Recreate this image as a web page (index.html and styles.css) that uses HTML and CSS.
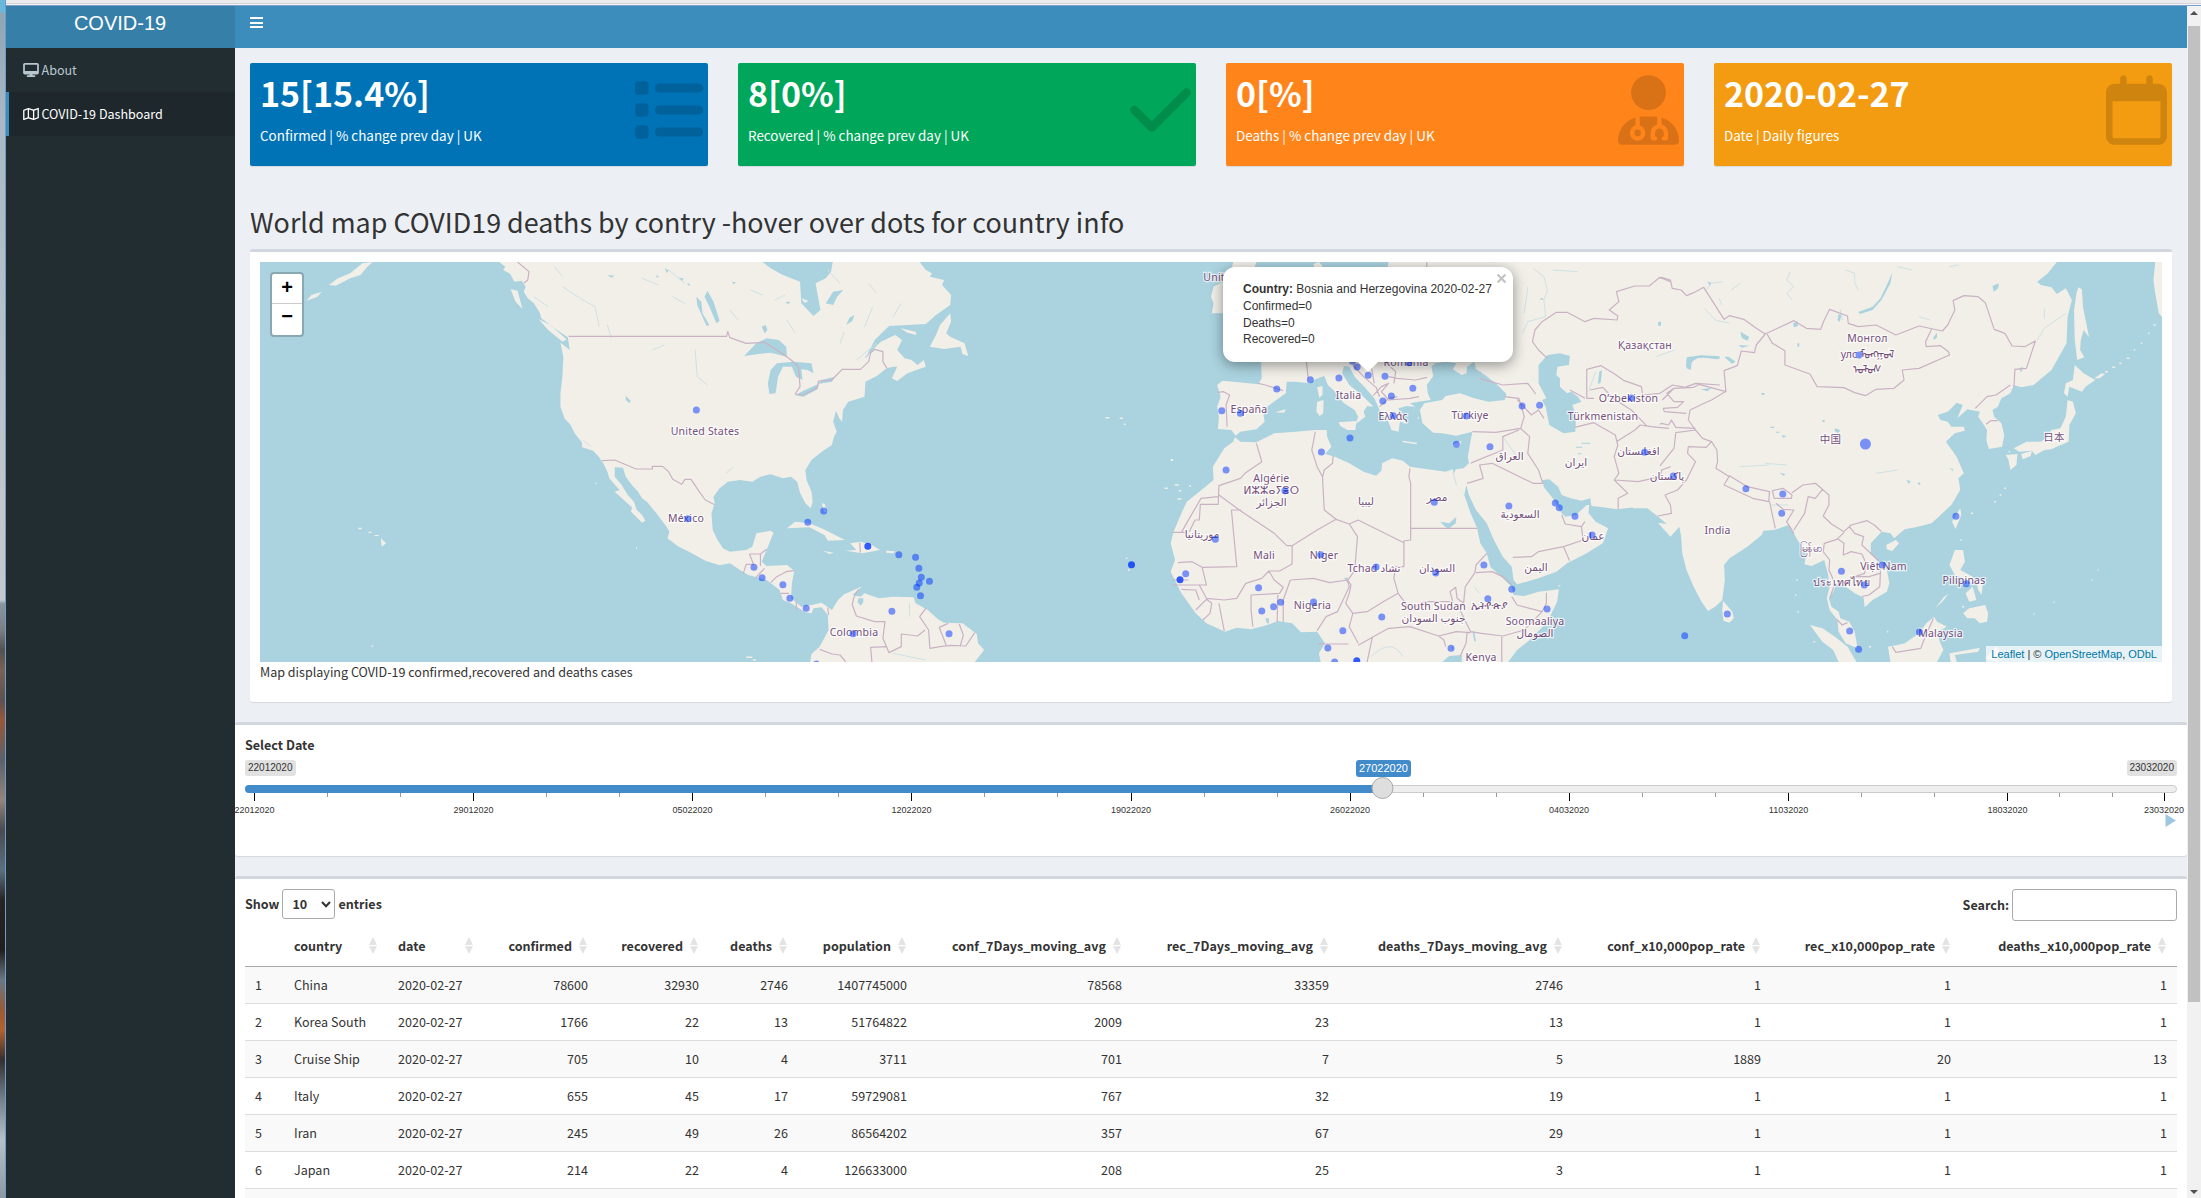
FILE: index.html
```html
<!DOCTYPE html>
<html lang="en">
<head>
<meta charset="utf-8">
<title>COVID-19</title>
<link rel="stylesheet" href="styles.css">
</head>
<body>
<div class="desktop"></div>
<div class="window">
  <div class="chrome"></div>
  <div class="app">
    <aside class="sidebar">
      <div class="logo">COVID-19</div>
      <nav class="menu">
        <a class="item">
          <svg width="16" height="14" viewBox="0 0 576 512"><path d="M64 0C28.7 0 0 28.7 0 64V352c0 35.3 28.7 64 64 64H240l-10.7 32H160c-17.7 0-32 14.3-32 32s14.3 32 32 32H416c17.7 0 32-14.3 32-32s-14.3-32-32-32H346.7L336 416H512c35.3 0 64-28.7 64-64V64c0-35.3-28.7-64-64-64H64zM512 64V288H64V64H512z"/></svg>
          <span>About</span>
        </a>
        <a class="item active">
          <svg width="16" height="14" viewBox="0 0 576 512"><path d="M565.6 36.2C572.1 40.7 576 48.1 576 56V392c0 10-6.2 18.9-15.5 22.4l-168 64c-5.2 2-10.9 2.1-16.1 .3L192.500 417.500l-160 61c-7.400 2.800-15.700 1.800-22.200-2.700S0 463.900 0 456V120c0-10 6.100-18.900 15.500-22.400l168-64c5.200-2 10.900-2.100 16.100-.3L383.500 94.500l160-61c7.400-2.800 15.700-1.800 22.200 2.700zM48 136.500V421.200l120-45.700V90.800L48 136.500zM360 422.700V137.300L216 89.300V374.700l144 48zm48-1.500l120-45.700V90.800L408 136.500V421.200z"/></svg>
          <span>COVID-19 Dashboard</span>
        </a>
      </nav>
    </aside>

    <div class="page">
      <header class="navbar"><div class="burger"><i></i><i></i><i></i></div></header>
      <main class="content">
        <section class="cards">
          <div class="card blue">
            <h3>15[15.4%]</h3><p>Confirmed | % change prev day | UK</p>
            <svg class="icon" width="70" height="70" viewBox="0 0 512 512"><rect x="16" y="46" width="98" height="98" rx="26"/><rect x="16" y="207" width="98" height="98" rx="26"/><rect x="16" y="368" width="98" height="98" rx="26"/><rect x="160" y="62" width="352" height="66" rx="32"/><rect x="160" y="223" width="352" height="66" rx="32"/><rect x="160" y="384" width="352" height="66" rx="32"/></svg>
          </div>
          <div class="card green">
            <h3>8[0%]</h3><p>Recovered | % change prev day | UK</p>
            <svg class="icon" width="61" height="70" viewBox="0 0 448 512"><path d="M438.600 105.400c12.500 12.500 12.500 32.800 0 45.300l-256 256c-12.500 12.500-32.800 12.500-45.300 0l-128-128c-12.500-12.500-12.500-32.800 0-45.300s32.800-12.500 45.300 0L160 338.700 393.400 105.400c12.500-12.500 32.800-12.500 45.300 0z"/></svg>
          </div>
          <div class="card orange">
            <h3>0[%]</h3><p>Deaths | % change prev day | UK</p>
            <svg class="icon" width="61" height="70" viewBox="0 0 448 512"><path d="M224 256A128 128 0 1 0 224 0a128 128 0 1 0 0 256zm-96 55.200C54 332.900 0 401.300 0 482.300C0 498.700 13.300 512 29.700 512H418.300c16.400 0 29.700-13.300 29.700-29.700c0-81-54-149.400-128-171.100V362c27.600 7.100 48 32.200 48 62v40c0 8.800-7.200 16-16 16H336c-8.800 0-16-7.200-16-16s7.200-16 16-16V424c0-17.700-14.300-32-32-32s-32 14.300-32 32v24c8.800 0 16 7.200 16 16s-7.200 16-16 16H256c-8.800 0-16-7.200-16-16V424c0-29.800 20.400-54.900 48-62V304.900c-6-.6-12.100-.9-18.300-.9H178.300c-6.200 0-12.300 .3-18.300 .9v65.400c23.100 6.900 40 28.300 40 53.700c0 30.900-25.100 56-56 56s-56-25.100-56-56c0-25.400 16.900-46.800 40-53.700V311.200zM144 448a24 24 0 1 0 0-48 24 24 0 1 0 0 48z"/></svg>
          </div>
          <div class="card yellow">
            <h3>2020-02-27</h3><p>Date | Daily figures</p>
            <svg class="icon" width="61" height="70" viewBox="0 0 448 512"><path d="M152 24c0-13.300-10.700-24-24-24s-24 10.700-24 24V64H64C28.700 64 0 92.700 0 128v16 48V448c0 35.300 28.700 64 64 64H384c35.300 0 64-28.700 64-64V192 144 128c0-35.300-28.700-64-64-64H344V24c0-13.300-10.700-24-24-24s-24 10.700-24 24V64H152V24zM48 192H400V448c0 8.800-7.200 16-16 16H64c-8.800 0-16-7.200-16-16V192z"/></svg>
          </div>
        </section>

        <h2 class="title">World map COVID19 deaths by contry -hover over dots for country info</h2>

        <section class="box map-box">
          <div class="map">
            <svg class="world" width="1902" height="400" viewBox="260 262 1902 400" preserveAspectRatio="none">
              <g transform="translate(240 250) scale(.4082 .33333)">
                <g class="land">
                  <path d="M635 36L650 50 645 60 662 72 672 95 690 92 700 110 695 125 705 145 720 160 735 190 738 205 770 235 803 262 808 300 785 278 792 320 790 380 785 430 785 470 795 505 810 525 820 550 838 578 838 592 865 602 880 622 890 640 900 665 905 685 915 700 930 720 918 725 945 755 960 772 958 785 985 818 993 812 985 795 972 780 965 755 950 735 935 705 918 680 918 652 938 653 945 680 960 705 975 725 985 745 997 755 1020 790 1045 830 1052 845 1047 865 1075 890 1100 905 1140 932 1175 946 1200 940 1225 960 1245 975 1290 990 1322 1020 1330 1050 1350 1060 1385 1087 1400 1090 1405 1075 1425 1072 1440 1095 1442 1140 1420 1190 1400 1212 1397 1236 1800 1236 1823 1200 1808 1180 1805 1152 1770 1120 1725 1118 1710 1108 1685 1080 1655 1060 1650 1042 1600 1040 1565 1045 1530 1030 1520 1040 1500 1035 1525 1008 1500 1022 1480 1033 1465 1050 1450 1080 1425 1058 1400 1065 1375 1070 1350 1045 1352 1000 1358 962 1340 945 1290 948 1278 935 1290 900 1307 848 1300 842 1265 850 1255 890 1240 900 1200 905 1183 895 1170 870 1158 840 1155 790 1163 760 1160 740 1175 715 1195 695 1225 690 1255 695 1275 680 1300 673 1330 685 1350 680 1365 695 1372 728 1385 760 1398 775 1403 755 1400 725 1388 690 1385 660 1400 630 1425 605 1450 585 1455 560 1462 545 1453 515 1460 482 1468 505 1475 515 1477 480 1490 455 1530 440 1532 395 1560 378 1584 355 1600 350 1610 350 1597 385 1610 393 1635 370 1680 350 1675 330 1660 345 1645 330 1628 325 1610 300 1622 270 1605 255 1570 275 1538 310 1555 270 1590 228 1635 225 1680 222 1705 195 1740 165 1742 135 1720 105 1725 90 1690 80 1695 70 1680 60 1665 36 1452 36 1448 65 1435 85 1410 100 1422 180 1405 198 1375 160 1372 95 1330 75 1300 55 1280 36Z"/>
                  <path d="M1740 190L1715 225 1705 255 1690 290 1725 297 1765 290 1770 312 1784 318 1775 280 1740 260 1730 250 1742 215ZM1618 235L1655 245 1658 255 1635 248ZM732 208L760 225 800 268 790 275 755 240ZM663 118L680 122 692 177 675 155ZM325 36L300 40 270 70 240 85 218 105 235 107 270 85 295 75 312 50ZM163 152L175 135 200 125 190 140ZM345 865L358 880 347 890ZM1340 835L1360 815 1395 820 1430 838 1482 870 1440 872 1432 855 1395 832ZM1483 902L1510 900 1495 880 1520 875 1548 885 1568 900 1525 910ZM1427 902L1455 908 1445 912ZM1583 902L1605 904 1600 910 1583 908ZM315 845h7v4h-7zM330 855h10v3h-10zM290 833h8v5h-8zM1375 145l18 8-10 6zM1425 760l8 2 4 25-6 0z"/>
                </g>
                <g class="lake">
                  <path d="M1235 318L1265 280 1290 265 1320 270 1338 290 1340 320 1300 308 1270 312ZM1297 432L1293 400 1300 360 1315 340 1355 335 1400 340 1405 370 1390 360 1375 358 1378 390 1362 380 1352 350 1330 350 1318 380 1312 430ZM1360 436L1380 422 1417 402 1415 418 1380 440ZM1415 402L1425 390 1457 380 1450 395ZM1145 122L1160 155 1175 212 1167 220 1150 170 1138 140ZM1118 140L1130 155 1133 190 1150 225 1143 228 1120 165ZM1278 230L1288 225 1292 240 1285 250ZM1515 1045h12v10l-6 12-8-10zM945 438l12 14-2 8-10-10zM1530 325L1568 260 1568 275 1535 322ZM1485 225l8-22 12-8-5 18zM900 75l18 2-8 6zM1435 160l18-35 25-5-15 20-10 25zM1040 55l10 6-4 8zM1075 82l12 4-4 8zM1095 100l8 2-3 6zM1020 75l6 4-5 5zM1205 95l10 2-6 6zM1335 158l12-4-2 8zM1450 130l14-6-4 10z"/>
                  <path class="stream" d="M790 110L840 150 870 170 880 230M900 225l10 40M1010 300l30-15M1115 300l5 80 25 25M1050 60l40 40M985 85l40 20M1060 140l30 20M1440 60l30 40M1550 170l-20 60M1510 330l50-50M1200 180l20 30M1250 120l30 15M1310 150l25-15M860 590l-20-20M720 140l35 30M770 50l20 30M1340 210l20 40M1470 280l10-35M1600 200l20-40M1540 100l20 30M1190 670l20-20M1640 1060v40M1600 1210l80 20"/>
                </g>
                <path class="border" d="M680 36L708 65 705 90 695 100M805 259H1192L1195 245 1200 263 1240 280 1285 277 1330 312 1350 330 1368 350 1372 410 1360 432 1380 435 1415 412 1417 393 1450 390 1475 358H1520L1540 335 1545 308 1555 298 1575 305 1575 335 1585 355M887 632L918 630 970 657H1010V649H1035L1050 665 1060 688 1082 703 1090 688H1105L1125 725 1140 750 1163 764M1248 912H1275V948M1248 912L1258 943H1240L1233 970M1275 912L1290 898M1262 985L1285 955M1300 998L1315 980 1338 965 1358 962M1325 1030H1345M1363 1055V1078M1440 1073L1442 1095M1518 878L1520 908"/>
                <path class="border" d="M1515 1018L1503 1045 1500 1065 1510 1098 1555 1115H1580L1575 1165 1590 1208 1620 1190V1152L1660 1158 1678 1140M1585 1190L1545 1192 1548 1236M1420 1198L1450 1212 1470 1215 1484 1236M1680 1075L1665 1100 1687 1140 1690 1195 1715 1190 1740 1186 1778 1188 1800 1148M1735 1120L1713 1132 1730 1186M1762 1122L1772 1155 1765 1186"/>
                <path class="isles" d="M2120 503h10M2155 505h8M2165 523h5M2280 629h6M2265 715h8M2290 705h10M2300 722h6M2325 708h5M2170 925h4M2175 960h5M1720 1225h20M1240 1222h15M1256 1230h8M322 1188h4M870 700h3M970 895h3"/>
              </g>

              <g transform="translate(1640 250) scale(.3578 .33333)">
                <g class="land">
                  <path d="M-20 36H1165L1140 70 1110 95 1120 105 1150 112 1165 132 1190 115 1207 150 1195 200 1192 280 1150 360 1100 405 1065 412 1045 405 1035 430 1010 445 1000 470 985 480 990 500 1010 520 1018 555 1012 590 975 597 968 570 970 540 955 515 945 500 950 485 915 478 887 505 902 465 885 458 860 485 832 495 840 510 860 515 870 530 905 530 908 542 880 550 855 575 885 620 905 670 890 685 895 720 870 765 815 820 770 832 740 838 710 865 700 850 675 845 645 880 645 912 690 960 697 1000 690 1025 650 1050 628 1072 625 1043 600 1030 575 1010 550 1000 540 1025 528 1045 535 1070 555 1085 560 1105 585 1115 600 1145 608 1195 575 1180 555 1145 552 1110 530 1080 522 1045 530 1010 525 970 515 930 480 948 460 943 465 905 440 870 430 850 415 825 375 840 345 842 340 855 300 890 250 925 235 945 237 990 230 1050 210 1070 190 1083 172 1055 150 1010 130 960 118 910 115 860 110 830 85 860 60 830 50 818 75 822 45 795 20 775 -20 775Z"/>
                  <path d="M232 1052L258 1085 262 1105 250 1118 233 1112 230 1080ZM475 1125L510 1135 545 1160 580 1190 605 1236H555L540 1200 510 1175ZM693 1190L720 1185 740 1180 780 1150 800 1120 822 1100 830 1115 858 1130 830 1145 838 1175 848 1200 830 1236H700ZM880 900H903L908 935 895 960 930 980 935 1000 905 985 880 975 865 945ZM903 1090L920 1075 965 1065 973 1090 970 1115 950 1120 935 1105 915 1105ZM910 1030L930 1010 940 1050 920 1055ZM940 990L958 1000 955 1035 945 1020ZM862 1032L845 1055 825 1075 850 1040ZM895 775L898 795 882 837 872 815ZM688 885L715 870 724 880 705 903 690 898ZM1225 112L1235 118 1238 170 1255 262 1240 240 1232 270 1230 300 1242 322 1222 330 1215 270 1213 180 1220 130ZM1215 345L1240 370 1272 390 1245 410 1235 425 1200 410 1195 440 1185 430 1190 400 1210 390ZM1195 450L1210 455 1218 490 1200 525 1198 575 1165 590 1150 598 1130 600 1105 615 1095 602 1060 605 1045 595 1080 575 1120 575 1135 565 1150 540 1175 535 1190 500ZM1022 615L1055 612 1052 645 1035 660 1030 630ZM1065 612L1095 603 1092 618 1070 628ZM1440 36H1462V205L1450 190 1440 130 1435 90ZM865 1210L890 1205 950 1193 945 1205 880 1215 885 1236H868ZM965 1225l30-35 10 10-5 36ZM1270 385L1290 370 1300 372 1285 385Z"/>
                </g>
                <g class="lake">
                  <path d="M705 68L700 100 675 150 650 180 615 192 610 186 650 170 672 145 690 105ZM130 355L132 330 160 318 220 320 215 328 180 322 160 325 145 335 142 360ZM235 320h12l20 15-10 6ZM280 245l25 15-5 12-15-8ZM428 220l12-6 2 14-12 4ZM555 192l8 2-5 22-6-6ZM545 535l15 6-6 8-10-6ZM170 418l30-4-12 10ZM985 108l18-8-2 14-12 12ZM340 428l8 2v5h-8zM1060 355l10-5-5 18ZM820 262l10-14v14l-8 8ZM395 555l14 3-8 6ZM390 668l16 4-4 6ZM775 700l8-4v10ZM865 655l10 2v6ZM745 690l12 4-6 8ZM275 285l30 2-20 6ZM188 95l12 3-6 8ZM365 530h10v4h-10zM380 545h10v3h-10zM510 510h6v6h-6zM440 280h5v10h-5z"/>
                  <path class="stream" d="M420 65L410 90 430 110 410 130 425 150M185 120l15-20 30-5M255 120l25-20M575 60l25 10 0 30 10 20M865 50l25-5M720 50l40 10M1190 190L1130 235 1110 270M180 175l30 35 40 10M660 670l60-10M280 650l80-5M350 640l60 5M365 765h50M560 180l5 30M220 145l10 20M1130 175v30M780 200l30 10"/>
                </g>
                <path class="border" d="M-5 106L40 95 60 82 85 90 90 115 115 120 130 137 150 128 178 112 235 208 250 197 290 208 325 235 350 252 325 285 320 308 283 303 272 347 235 362 240 425 165 403 150 412 95 415 62 450M350 252L430 212 465 235 505 238 515 210 530 178 580 198 582 220 610 230 660 225 715 255 780 228 845 243 860 225 880 180 875 152 905 137 945 140 965 158 990 238 1020 250 1040 288 1075 290 1105 273 1080 355 1048 358 1045 410M355 252L370 280 405 302 405 345 475 372 495 410 570 413 600 428 630 437 660 418 710 415 738 390 733 360 780 355 865 315 862 305 840 287 800 290 798 275 815 238M937 475L970 440 995 435 1035 405M967 523L980 512H1000M238 425L200 450 175 462 140 480 135 510 155 540M95 415L75 430 95 455 122 455 105 472 65 475 68 485 130 490M-5 390L10 400M40 488L45 530M-5 535H40L60 520 80 525 88 510 100 532 155 535M155 540L175 565 200 575 215 600 217 635 212 655 250 680M155 540L100 548 95 595 50 655 20 665 15 685-5 690M200 575L185 592 135 590 133 610 155 635 130 690 105 720 70 735 85 765 88 790 50 798M250 677L300 710 362 725 360 755 315 745 235 705ZM370 722L400 715 425 735 423 745 375 745ZM425 728L455 705 490 700 510 718 490 745 470 740 460 790 430 840M362 755L378 835M380 760L400 778 430 780 410 815 430 850M510 718L528 735V765L512 798 535 822 570 845 590 825 635 812 655 825 675 845M570 848L550 868 515 880 512 905 530 930 528 960 545 1000 530 1045M585 830L600 850 625 860 620 885 665 930 672 965 670 1010 640 1035 620 1040M550 865L570 880 568 915 590 905 620 912 630 935 628 970 595 982 600 1010M600 980H640L670 970M550 1108L565 1125 580 1118M705 1190L715 1207 785 1195 797 1160 820 1105"/>
                <path class="isles" d="M1300 365h8M1320 352h8M1340 340h6M1360 325h8M1380 300h4M1400 280h4M1420 250h4M1435 225h6M990 755h5M1005 735h5M1018 715h5M1030 605h4M925 790h6M895 870h4M437 990h4M433 1035h4M440 1085h4M485 1175h5M1100 1092h3M1278 960h3M1262 990h3M1155 1057h3M900 1070h6M690 1145h4M640 1190h6"/>
              </g>

              <g transform="translate(1160 250) scale(.3571 .33333)">
                <g class="land">
                  <path d="M160 405L175 392 235 398 275 403 285 385 283 335V200L430 100 455 60 636 60 640 36H1400V785L1370 770 1330 772 1280 778 1240 772 1208 768 1205 745 1180 752 1150 745 1125 735 1115 710 1090 688 1070 690 1075 712 1100 745 1108 760 1125 790 1135 800 1165 795 1195 765 1202 765 1200 790 1220 815 1255 835 1240 880 1195 910 1140 940 1110 965 1060 985 1000 1003 990 990 985 950 960 920 935 870 915 820 885 780 865 735 858 705 852 735 820 680 828 658 850 655 865 640 862 620 870 570 875 545 830 557 790 550 765 548 735 520 728 480 740 460 790 450 800 438 840 430 880 445 920 455 965 450 970 432 940 400 910 375 885 357 880 335 860 350 858 370 845 375 820 358 830 340 800 335 770 340 760 350 765 378 747 405 750 430 758 450 725 455 700 460 715 470 690 468 668 475 672 495 690 520 672 515 668 545 648 540 640 515 615 480 600 445 570 408 545 380 530 350 515 348 510 370 530 405 565 435 598 470 580 468 570 485 575 500 548 522 555 500 545 480 515 460 490 425 470 405 460 378 435 388 420 400 380 395 355 395 352 430 300 470 290 495 293 515 270 538 225 545 212 557 200 540 162 537 165 500 160 470 170 440Z"/>
                  <path d="M210 562L225 575 270 577 320 550 380 545 435 540 467 540 468 560 480 590 462 612 490 620 530 640 570 665 605 677 620 662 622 640 650 625 680 632 700 650 750 658 800 665 820 658 830 695 852 735 870 790 888 835 897 880 915 910 925 950 950 975 985 1010 990 1035 1020 1038 1060 1025 1117 1018 1112 1055 1085 1115 1035 1170 1000 1200 975 1236H450L445 1210 462 1180 440 1145 395 1147 370 1120 330 1113 300 1125 255 1138 215 1133 182 1145 130 1120 100 1090 60 1030 30 965 42 930 30 880 38 845 60 790 75 755 110 725 150 690 148 650 180 595 205 575ZM440 412L455 408 455 435 446 443ZM440 455L458 450 457 490 447 498 438 485ZM500 517L550 513 547 540 525 540 505 528ZM678 572L720 578 718 583 680 577ZM818 585L845 572 838 590 825 592ZM322 487L352 478 348 488ZM150 110L176 95V190L145 190 150 160 143 140ZM205 36H270L262 60H200ZM430 42l15-6 10 12-8 15-14-6Z"/>
                  <path d="M30 630h6v3h-6zM50 745h10v4H48zM722 500l4 4-4 4zM735 480l6 3-4 5zM1115 1005l8 2-6 3z"/>
                </g>
                <g class="lake">
                  <path d="M1060 345L1085 315 1120 310 1148 318 1145 345 1113 350 1110 375 1120 385 1120 410 1140 430 1152 425 1170 440 1180 455 1155 465 1165 500 1163 545 1130 550 1090 525 1080 470 1070 450 1082 445 1060 400ZM790 1236L810 1218 845 1215V1236ZM1230 365l8-5-4 38-8 4ZM1475 322l40-6 53 3-2 8-60-5-20 15-5 20-8-8zM875 1145h5l5 30-5-3ZM785 815l25 5 20-20-2 20-20 16-10-6ZM515 985l10-3v12ZM815 1190l8 3-4 6ZM295 1105h10v15h-6ZM900 365h-10l5 5ZM1395 215h8v12h-8zM1180 578h25v3h-25zM1165 590h18v3h-18zM1170 610h10v3h-10zM1065 145h8v4h-8z"/>
                  <path class="stream" d="M1045 55L1075 80 1085 120 1075 150 1080 200 1030 215 1015 250M1100 60l70 5M1030 110l-10 80M820 665l10 40M1220 365l-20 60M1440 300l-50 20M590 1220q60-60 90 0M960 560l40 60M880 1010l15 20"/>
                </g>
                <path class="border" d="M275 400L295 405 345 422M162 427L178 425 195 435 185 465 188 530M410 335L415 385M747 36V60M270 580L285 635 240 668 225 685 165 707 163 763 113 763 110 810H98L82 845M35 847H75M60 847L85 800 115 745 163 740M165 735L225 782 320 850 355 887 370 887 440 840 493 808 460 780 455 680 440 650 425 600 435 545M228 780H200L215 950 118 952 90 935 50 938M493 808L530 822 555 810 683 878M485 618L483 640 460 660 455 682M700 655L697 680 702 700V870L683 873V950L660 950 655 985 667 1030M702 835H888M370 887V942L335 963 305 963 285 985 240 1000 215 1045M530 822L553 860 545 962 523 995M365 990L430 985 475 998 525 990 530 1010 497 1085 465 1100 440 1142M305 963L320 990 345 1012 335 1030 255 1035V1080L260 1130M330 1035L328 1115M345 1115V1050L365 990M118 952L130 1005H35M35 990H80M110 1005L130 1045 180 1050 215 1045M525 990L535 1005 530 1030 520 1060 540 1090 530 1130 555 1180M440 1182H528M667 1030L625 1055 580 1085 540 1090M667 1030L700 1078 740 1055 820 1055 812 1025 828 1012 832 1045 850 1060M850 1060L855 1010 882 968 885 945 915 910M885 968L930 965 960 980 985 1005M850 1055L840 1080 870 1145 900 1150 960 1158 1020 1140 1070 1085 1000 1065 985 1040M1082 1028V1060L1070 1085M957 1160V1236M555 1186L590 1165 640 1135 700 1130 780 1158 830 1145 870 1148M780 1158L795 1170 800 1190M860 1148L857 1180 840 1220M595 1160L580 1236M60 1018L100 1020 110 1050M100 1080L130 1048 145 1060 140 1090 120 1110M165 1060L180 1143M860 700L905 685 895 645 930 640M870 640L880 635 960 600 960 560 1005 540M875 545L940 547 1010 535M930 640L1045 700H1072M1010 535L1035 560 1030 610 1060 660 1072 700M988 922L1040 920 1060 905 1130 890 1185 870 1180 830 1190 815M1130 890L1147 932M1125 795L1135 822 1180 830M895 385L960 405 1030 400 1052 432M965 440L1005 445 1020 500 1010 535M1000 448L1040 495 1060 480 1075 505M1162 532L1215 518 1275 555 1282 585 1272 620 1285 670 1272 690 1310 730 1283 745V778M1272 690L1340 695 1400 680 1405 660 1430 650M1278 575L1330 540 1345 525 1375 530 1425 535M1085 325L1060 300 1043 275 1050 240 1070 215 1110 187H1140L1190 215 1215 205 1280 210 1282 198 1258 180 1285 155 1278 125 1330 108H1370L1400 82 1430 95M1215 445H1195V358L1235 347 1270 370 1300 392 1348 410 1352 435 1400 430 1435 405 1470 412 1500 400 1568 405M1148 420L1190 445M1205 420L1240 412 1260 435 1275 450 1320 480 1365 530M597 437L620 410 640 400 620 425 640 450 700 445 725 440M540 345L570 380 605 412 615 440M640 380L665 385 715 390 748 382M640 345L660 365 655 400M665 440L640 445 615 470M590 340L600 400"/>
              </g>

              <g class="places">
                <text x="705" y="435">United States</text>
                <text x="686" y="522">México</text>
                <text x="854" y="636">Colombia</text>
                <text x="1245" y="281">United Kingdom</text>
                <text x="1249" y="412.500">España</text>
                <text x="1348.500" y="399">Italia</text>
                <text x="1393" y="420">Ελλάς</text>
                <text x="1470" y="419">Türkiye</text>
                <text x="1406" y="366">România</text>
                <text x="1645" y="349">Қазақстан</text>
                <text x="1628.500" y="401.500">O‘zbekiston</text>
                <text x="1603" y="419.500">Türkmenistan</text>
                <text x="1271.400" y="482">Algérie</text>
                <text x="1271.400" y="493.500">ⵍⵣⵣⴰⵢⴻⵔ</text>
                <text x="1271.400" y="506">الجزائر</text>
                <text x="1366" y="505">ليبيا</text>
                <text x="1437" y="501">مصر</text>
                <text x="1509.600" y="460">العراق</text>
                <text x="1576" y="466">ایران</text>
                <text x="1638.500" y="455">افغانستان</text>
                <text x="1667" y="480">پاکستان</text>
                <text x="1520" y="518">السعودية</text>
                <text x="1593" y="540">عمان</text>
                <text x="1202" y="538">موريتانيا</text>
                <text x="1264" y="558.500">Mali</text>
                <text x="1324" y="558.500">Niger</text>
                <text x="1374" y="571.500">Tchad تشاد</text>
                <text x="1437" y="571.500">السودان</text>
                <text x="1536" y="570.500">اليمن</text>
                <text x="1312.500" y="609">Nigeria</text>
                <text x="1433.500" y="609.500">South Sudan</text>
                <text x="1433.500" y="622">جنوب السودان</text>
                <text x="1489.600" y="609">ኢትዮጵያ</text>
                <text x="1535" y="625">Soomaaliya</text>
                <text x="1535" y="637">الصومال</text>
                <text x="1481" y="661">Kenya</text>
                <text x="1867.500" y="342">Монгол</text>
                <text x="1867.500" y="358">улс ᠮᠣᠩᠭᠣᠯ</text>
                <text x="1867.500" y="373">ᠤᠯᠤᠰ</text>
                <text x="1830.500" y="443">中国</text>
                <text x="2054" y="441">日本</text>
                <text x="1717.500" y="533.500">India</text>
                <text x="1811" y="552">မြန်မာ</text>
                <text x="1883.500" y="570">Việt Nam</text>
                <text x="1841.500" y="586">ประเทศไทย</text>
                <text x="1964" y="584">Pilipinas</text>
                <text x="1940.500" y="636.500">Malaysia</text>
              </g>

              <g transform="translate(240 250) scale(.4082 .33333)">
                <path class="dots" d="M1118 480h.01M1430 783h.01M1391 817h.01M1097 806h.01M1259 952h.01M1279 983h.01M1330 1004h.01M1347 1045h.01M1387 1075h.01M1502 1151h.01M1412 1242h.01M1614 914h.01M1655 922h.01M1663 955h.01M1689 994h.01M1669 982h.01M1658 1012h.01M1667 1037h.01M1597 1084h.01M1737 1151h.01"/>
                <path class="dots" d="M1664 999h.01"/>
                <path class="dots dark" d="M1538 889h.01M2184 944h.01"/>
              </g>
              <g transform="translate(1640 250) scale(.3578 .33333)">
                <path class="dots" d="M612 315h.01M93 678h.01M296 716h.01M399 732h.01M396 790h.01M883 799h.01M677 945h.01M563 964h.01M627 1005h.01M912 1001h.01M244 1092h.01M125 1157h.01M586 1143h.01M611 1198h.01M781 1146h.01"/>
                <path class="dots big" d="M630 582h.01"/>
              </g>
              <g transform="translate(1160 250) scale(.3571 .33333)">
                <path class="dots" d="M421 389h.01M327 417h.01M501 384h.01M552 351h.01M539 334h.01M583 376h.01M630 379h.01M708 415h.01M697 338h.01M648 438h.01M624 453h.01M173 482h.01M225 490h.01M653 497h.01M532 564h.01M858 498h.01M1014 468h.01M1063 466h.01M1320 444h.01M452 606h.01M830 583h.01M924 590h.01M1357 607h.01M185 660h.01M350 722h.01M768 757h.01M977 768h.01M1107 759h.01M1118 773h.01M1162 799h.01M1210 855h.01M155 868h.01M450 914h.01M605 951h.01M772 969h.01M907 945h.01M72 971h.01M276 1013h.01M985 1018h.01M918 1046h.01M1084 1077h.01M430 1056h.01M338 1057h.01M318 1070h.01M285 1083h.01M621 1101h.01M512 1142h.01M470 1194h.01M815 1195h.01M489 1236h.01"/>
                <path class="dots dark" d="M56 989h.01M551 1232h.01"/>
              </g>
            </svg>
            <div class="zoom"><span>+</span><span>−</span></div>
            <div class="popup">
              <b>Country:</b> Bosnia and Herzegovina 2020-02-27<br>Confirmed=0<br>Deaths=0<br>Recovered=0
              <svg class="close" width="9" height="9" viewBox="0 0 9 9"><path d="M.5 .5L8.500 8.500M8.500 .5L.5 8.500"/></svg>
              <svg class="tip" width="22" height="11" viewBox="0 0 22 11"><path d="M0 0H22L11 11Z"/></svg>
            </div>
            <div class="credit"><a>Leaflet</a> | © <a>OpenStreetMap</a>, <a>ODbL</a></div>
          </div>
          <p class="caption">Map displaying COVID-19 confirmed,recovered and deaths cases</p>
        </section>

        <section class="box slider-box">
          <label class="bold">Select Date</label>
          <div class="range">
            <div class="ends"><span>22012020</span><span>23032020</span></div>
            <span class="value">27022020</span>
            <svg width="1952" height="56" viewBox="235 777 1952 56">
              <rect x="245.500" y="785.500" width="1931" height="7" rx="3.500" fill="#eee" stroke="#ccc"/>
              <path d="M1383 785H249a4 4 0 0 0 0 8H1383Z" fill="#428bca"/>
              <path stroke="#000" d="M254.500 793v8M473.500 793v8M692.500 793v8M911.500 793v8M1131.500 793v8M1350.500 793v8M1569.500 793v8M1788.500 793v8M2007.500 793v8M2164.500 793v8"/>
              <path stroke="#999" d="M327.500 793v4M400.500 793v4M546.500 793v4M619.500 793v4M765.500 793v4M838.500 793v4M984.500 793v4M1057.500 793v4M1204.500 793v4M1277.500 793v4M1423.500 793v4M1496.500 793v4M1642.500 793v4M1715.500 793v4M1861.500 793v4M1934.500 793v4M2059.500 793v4M2112.500 793v4"/>
              <circle cx="1382.500" cy="788" r="10.500" fill="#dedede" stroke="#aaa"/>
              <g class="ticks">
                <text x="254.500" y="813">22012020</text><text x="473.500" y="813">29012020</text><text x="692.500" y="813">05022020</text><text x="911.500" y="813">12022020</text><text x="1131" y="813">19022020</text><text x="1350" y="813">26022020</text><text x="1569" y="813">04032020</text><text x="1788.500" y="813">11032020</text><text x="2007.500" y="813">18032020</text><text x="2164" y="813">23032020</text>
              </g>
              <path d="M2165.500 814V827L2176 820.500Z" fill="#9dc6df"/>
            </svg>
          </div>
        </section>

        <section class="box table-box">
          <div class="tools">
            <div class="length bold"><span>Show</span><span class="select">10<svg width="10" height="7" viewBox="0 0 10 7"><path d="M1 1L5 5.300 9 1"/></svg></span><span>entries</span></div>
            <div class="search bold"><span>Search:</span><input type="text"></div>
          </div>
          <table>
            <colgroup><col style="width:39px"><col style="width:104px"><col style="width:96px"><col style="width:114px"><col style="width:111px"><col style="width:89px"><col style="width:119px"><col style="width:215px"><col style="width:207px"><col style="width:234px"><col style="width:198px"><col style="width:190px"><col style="width:216px"></colgroup>
            <thead><tr><th></th><th class="l"><div>country<i></i></div></th><th class="l"><div>date<i></i></div></th><th><div>confirmed<i></i></div></th><th><div>recovered<i></i></div></th><th><div>deaths<i></i></div></th><th><div>population<i></i></div></th><th><div>conf_7Days_moving_avg<i></i></div></th><th><div>rec_7Days_moving_avg<i></i></div></th><th><div>deaths_7Days_moving_avg<i></i></div></th><th><div>conf_x10,000pop_rate<i></i></div></th><th><div>rec_x10,000pop_rate<i></i></div></th><th><div>deaths_x10,000pop_rate<i></i></div></th></tr></thead>
            <tbody>
              <tr><td>1</td><td>China</td><td>2020-02-27</td><td>78600</td><td>32930</td><td>2746</td><td>1407745000</td><td>78568</td><td>33359</td><td>2746</td><td>1</td><td>1</td><td>1</td></tr>
              <tr><td>2</td><td>Korea South</td><td>2020-02-27</td><td>1766</td><td>22</td><td>13</td><td>51764822</td><td>2009</td><td>23</td><td>13</td><td>1</td><td>1</td><td>1</td></tr>
              <tr><td>3</td><td>Cruise Ship</td><td>2020-02-27</td><td>705</td><td>10</td><td>4</td><td>3711</td><td>701</td><td>7</td><td>5</td><td>1889</td><td>20</td><td>13</td></tr>
              <tr><td>4</td><td>Italy</td><td>2020-02-27</td><td>655</td><td>45</td><td>17</td><td>59729081</td><td>767</td><td>32</td><td>19</td><td>1</td><td>1</td><td>1</td></tr>
              <tr><td>5</td><td>Iran</td><td>2020-02-27</td><td>245</td><td>49</td><td>26</td><td>86564202</td><td>357</td><td>67</td><td>29</td><td>1</td><td>1</td><td>1</td></tr>
              <tr><td>6</td><td>Japan</td><td>2020-02-27</td><td>214</td><td>22</td><td>4</td><td>126633000</td><td>208</td><td>25</td><td>3</td><td>1</td><td>1</td><td>1</td></tr>
              <tr><td></td><td></td><td></td><td></td><td></td><td></td><td></td><td></td><td></td><td></td><td></td><td></td><td></td></tr>
            </tbody>
          </table>
        </section>
      </main>
    </div>
    <div class="scrollbar"><i class="up"></i><div class="thumb"></div><i class="down"></i></div>
  </div>
</div>
</body>
</html>
```

FILE: styles.css
```css
* { box-sizing: border-box; }
body {
  margin: 0; width: 2201px; height: 1198px; overflow: hidden; display: flex;
  font-family: "Noto Sans CJK SC", "Noto Sans", sans-serif;
  font-size: 12.560px; line-height: 20px; color: #333;
}
h2, h3, p { margin: 0; font-weight: 400; }
.bold { font-weight: 700; }

/* slice of the wallpaper left of the window */
.desktop {
  width: 5px;
  background: linear-gradient(#6cb8da 0 12px, #8fa6b3 13px, #a9b9c3 120px, #c3c6ca 500px, #c5c7c9 600px, #8a949b 604px, #7c7f83 630px, #55504e 650px, #7a6253 670px, #5c5350 700px, #9a5638 720px, #5d6168 760px, #93857c 800px, #4b4a4e 830px, #5b707e 870px, #2b2321 900px, #231d1c 950px, #6b7781 980px, #9b5a34 1010px, #b5622c 1030px, #35302f 1060px, #76818c 1100px, #b7c0c8 1140px, #8d98a2 1198px);
}
.window { flex: 1; display: flex; flex-direction: column; border-left: 1px solid #6f9bd0; }
.chrome { height: 6px; background: #ebebee; border-bottom: 1px solid #7e9fcb; box-shadow: inset 0 -1px #f4f4f4, inset 0 -2px #d2d3d7; }
.app { flex: 1; display: flex; min-height: 0; }

.sidebar { width: 229px; background: #222d32; }
.logo { height: 42px; padding: 6px 1px 0 0; background: #367fa9; color: #fff; text-align: center; font: 20px/22px "Liberation Sans", sans-serif; }
.item { display: flex; align-items: center; gap: 2.500px; height: 44px; padding-left: 14px; border-left: 3px solid transparent; color: #b8c7ce; fill: #b8c7ce; }
.item.active { background: #1e282c; border-left-color: #3c8dbc; color: #fff; fill: #fff; }

.page { width: 1952px; display: flex; flex-direction: column; background: #ecf0f5; }
.navbar { height: 42px; background: #3c8dbc; padding: 11px 15px; flex: none; }
.burger { display: flex; flex-direction: column; gap: 2.500px; width: 13px; }
.burger i { height: 2px; background: #fff; }
.content { flex: 1; min-height: 0; overflow: hidden; }

.cards { display: grid; grid-template-columns: repeat(4, 1fr); gap: 30px; padding: 15px 15px 0; }
.card { position: relative; height: 103px; padding: 9px 10px; border-radius: 2px; color: #fff; box-shadow: 0 1px 1px rgba(0,0,0,.1); }
.card h3 { font-size: 34px; font-weight: 700; line-height: 42px; }
.card p { margin-top: 11px; font-size: 13.430px; line-height: 21px; }
.card .icon { position: absolute; top: 12px; right: 5px; fill: rgba(0,0,0,.15); }
.blue { background: #0073b7; }
.green { background: #00a65a; }
.orange { background: #ff851b; }
.yellow { background: #f39c12; }

.title { margin: 39px 15px 0; font-size: 26.900px; line-height: 34px; }

.box { background: #fff; border-top: 3px solid #d2d6de; border-radius: 3px; box-shadow: 0 1px 1px rgba(0,0,0,.1); }
.map-box { margin: 10px 15px 0; height: 453px; padding: 10px; }
.map { position: relative; height: 400px; background: #aad3df; overflow: hidden; }
.world { display: block; }
.land { fill: #f2efe9; }
.lake { fill: #aad3df; }
.stream { fill: none; stroke: #cfe1e4; stroke-width: 1px; vector-effect: non-scaling-stroke; }
.isles { stroke: #eeeee6; stroke-width: 1.500px; vector-effect: non-scaling-stroke; }
.border { fill: none; stroke: #c9b2c4; stroke-width: 1.200px; stroke-linejoin: round; vector-effect: non-scaling-stroke; }
.dots { fill: none; stroke: #0033ff; stroke-opacity: .5; stroke-width: 7px; stroke-linecap: round; vector-effect: non-scaling-stroke; }
.dots.dark { stroke-opacity: .8; }
.dots.big { stroke-width: 11px; }
.places text {
  font: 10.500px "Noto Sans", "DejaVu Sans", "Noto Sans CJK SC", sans-serif; letter-spacing: .2px; text-anchor: middle;
  fill: #75507b; stroke: rgba(255,255,255,.7); stroke-width: 2.500px; paint-order: stroke;
}
.zoom { position: absolute; left: 10px; top: 10px; width: 34px; height: 65px; border: 2px solid rgba(0,0,0,.2); background: #fff; background-clip: padding-box; border-radius: 4px; }
.zoom span { display: block; height: 30px; text-align: center; font: bold 20px/25px "Liberation Sans", sans-serif; color: #000; }
.zoom span:first-child { height: 30px; border-bottom: 1px solid #ccc; line-height: 26px; }
.popup { position: absolute; left: 963px; top: 5px; width: 290px; height: 95px; padding: 14px 0 0 20px; border-radius: 12px; background: #fff; box-shadow: 0 3px 14px rgba(0,0,0,.4); font: 12px/16.800px "Liberation Sans", sans-serif; color: #333; white-space: nowrap; }
.close { position: absolute; right: 7px; top: 7px; stroke: #c3c3c3; stroke-width: 2.200px; }
.tip { position: absolute; left: 134px; top: 94px; fill: #fff; }
.credit { position: absolute; right: 0; bottom: 0; height: 16px; padding: 0 5px; background: rgba(255,255,255,.7); font: 11px/16px "Liberation Sans", sans-serif; color: #333; }
.credit a { color: #0078a8; }
.caption { line-height: 20px; }

.slider-box { margin-top: 20px; height: 134px; padding-top: 10px; overflow: hidden; }
.slider-box label { display: block; margin: 0 10px; }
.range { position: relative; margin-top: 5px; }
.range > svg { display: block; margin-top: 1px; }
.ends { display: flex; justify-content: space-between; padding: 0 10px; }
.ends span { height: 16px; padding: 0 3px; border-radius: 3px; background: #e1e1e1; font: 10px/15px "Liberation Sans", sans-serif; color: #333; }
.value { position: absolute; left: 1121px; top: 0; height: 17px; padding: 0 3px; border-radius: 3px; background: #428bca; color: #fff; font: 11px/16px "Liberation Sans", sans-serif; }
.ticks text { font: 9px "Liberation Sans", sans-serif; text-anchor: middle; fill: #333; }

.table-box { margin-top: 20px; padding: 10px; height: 340px; }
.tools { display: flex; justify-content: space-between; height: 36px; }
.length, .search { display: flex; }
.length { height: 30px; align-items: center; gap: 3px; }
.select { display: flex; align-items: center; justify-content: space-between; width: 53px; height: 30px; padding: 0 3px 0 9px; border: 1px solid #aaa; border-radius: 3px; }
.select svg { fill: none; stroke: #333; stroke-width: 2px; }
.search { height: 32px; align-items: center; gap: 3px; }
.search input { width: 165px; height: 32px; margin: 0; border: 1px solid #aaa; border-radius: 3px; background: #fff; }
table { width: 1932px; table-layout: fixed; border-collapse: separate; border-spacing: 0; }
th { height: 42px; padding: 0 11px 0 10px; border-bottom: 1px solid #a9a9a9; white-space: nowrap; }
th div { display: flex; align-items: center; justify-content: flex-end; gap: 7px; }
th.l div { justify-content: space-between; }
th i { width: 8px; height: 17px; background: #e3e3e3; clip-path: polygon(50% 0, 100% 47%, 0 47%, 0 54%, 100% 54%, 50% 100%, 0 54%, 0 47%); }
td { height: 37px; padding: 0 10px; border-bottom: 1px solid #ddd; text-align: right; }
td:nth-child(-n+3) { text-align: left; }
tbody tr:nth-child(odd) { background: #f9f9f9; }

.scrollbar { width: 14px; background: #f1f1f1; display: flex; flex-direction: column; align-items: center; padding-top: 5px; }
.scrollbar i { width: 0; border: 4px solid transparent; }
.scrollbar .up { border-top: 0; border-bottom-color: #505050; }
.scrollbar .down { border-bottom: 0; border-top-color: #505050; margin: auto 0 4px; }
.thumb { width: 12px; height: 976px; margin-top: 11px; background: #c1c1c1; }
```
